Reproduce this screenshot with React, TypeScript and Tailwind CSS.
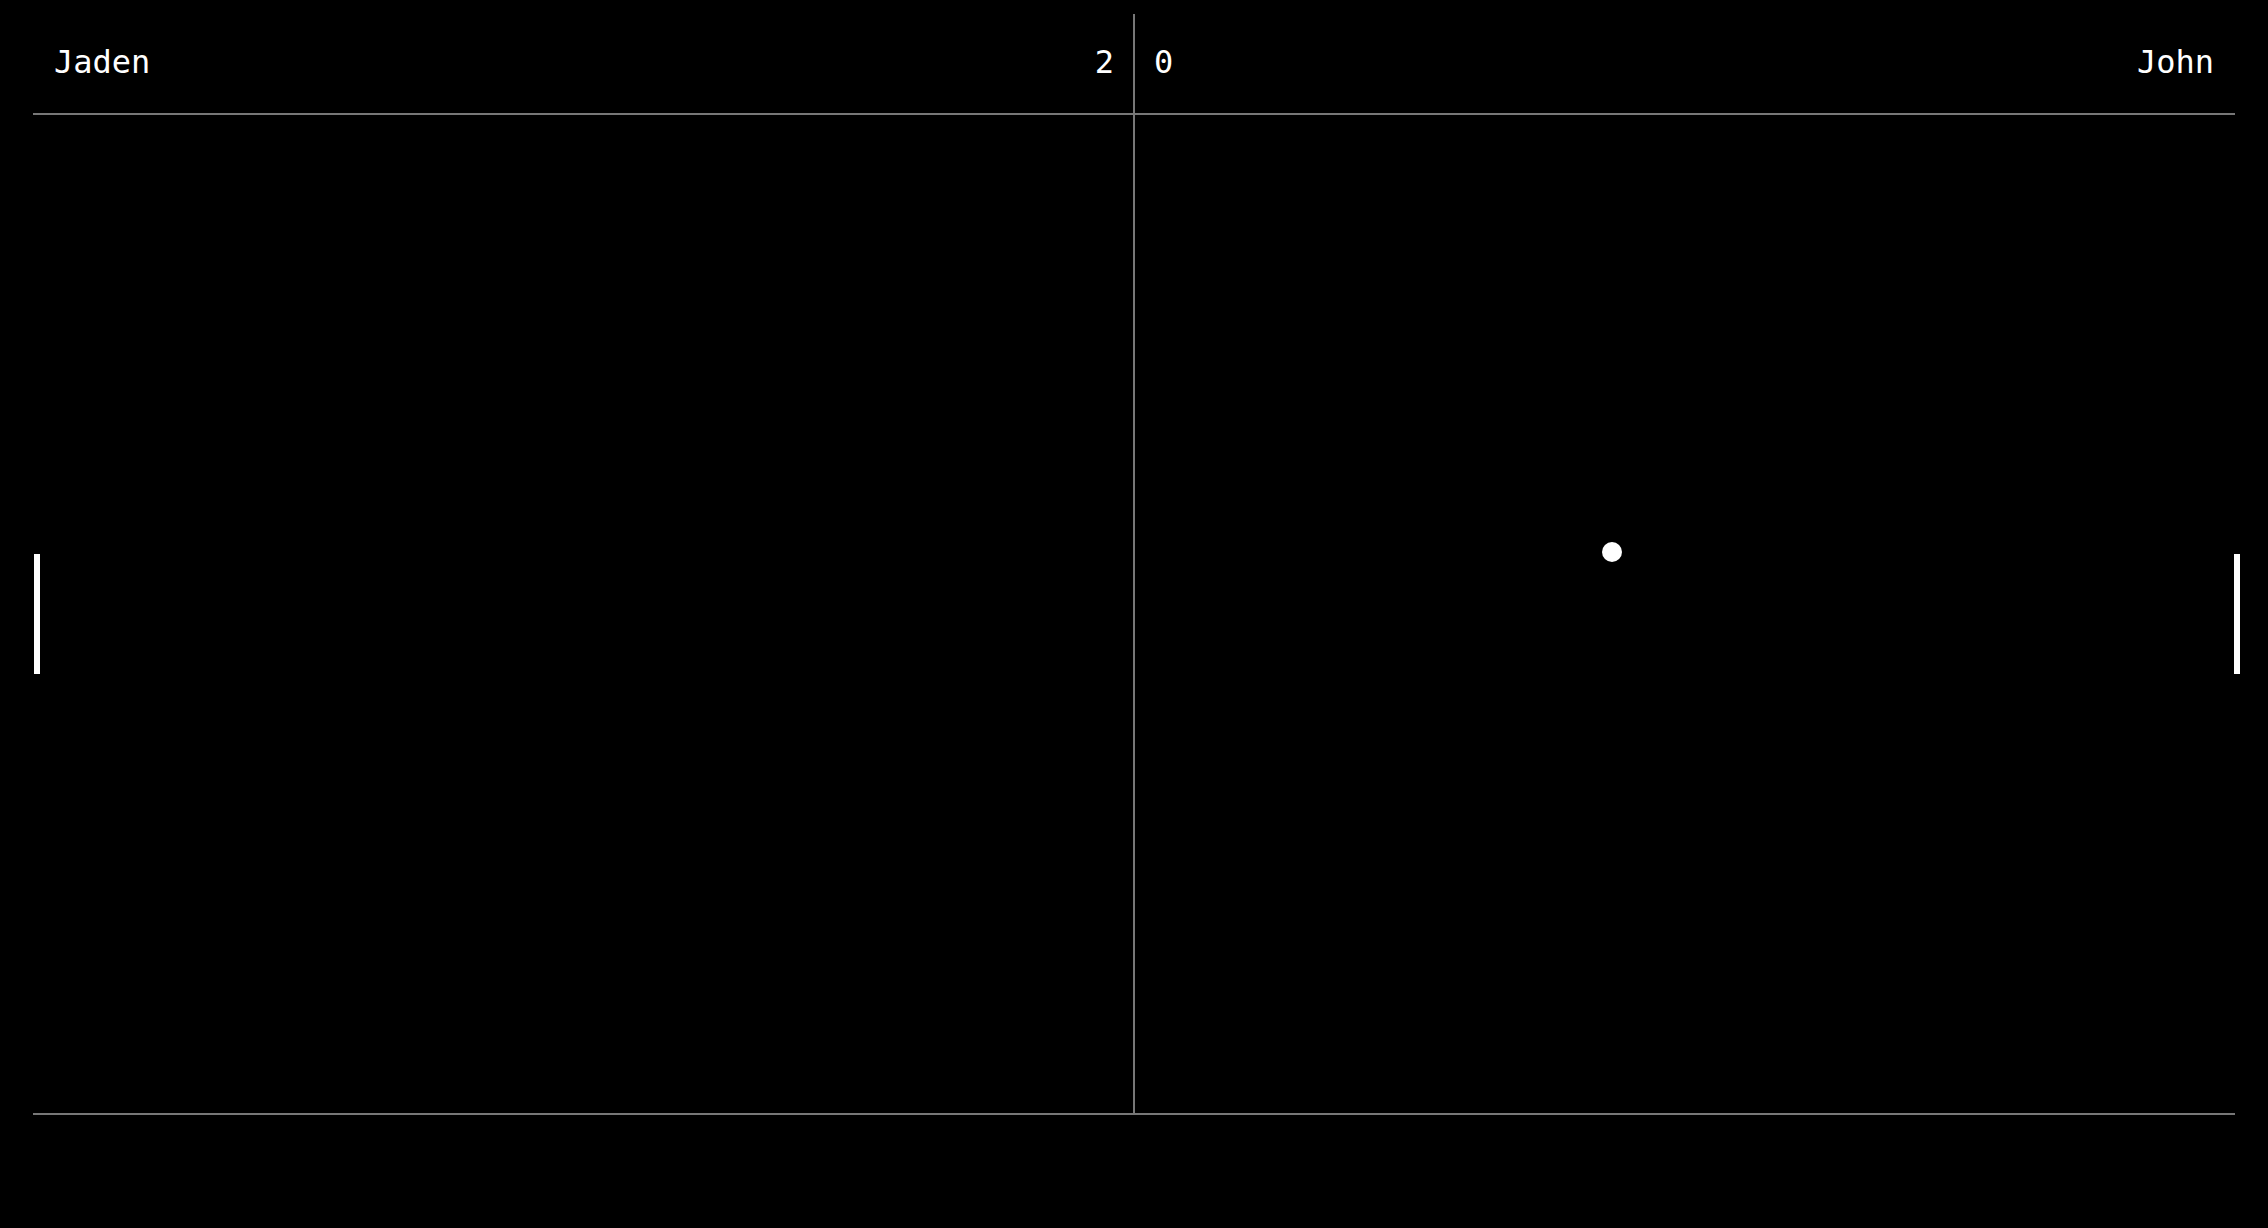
import React from 'react';

// Pong scoreboard + court
const Paddle = ({ side }: { side: 'left' | 'right' }) => (
  <div
    className={
      side === 'left'
        ? 'absolute left-[1px] top-[439px] w-[6px] h-[120px] bg-white'
        : 'absolute right-[-5px] top-[439px] w-[6px] h-[120px] bg-white'
    }
  />
);

const App = () => {
  const players = { left: 'Jaden', right: 'John' };
  const score = { left: 2, right: 0 };

  return (
    <div
      className="w-full h-[1228px] bg-black text-white px-[33px] pt-[14px]"
      style={{ fontFamily: '"DejaVu Sans Mono", "Liberation Mono", monospace' }}
    >
      <div className="grid grid-cols-[1100px_2px_1100px]">
        {/* Header */}
        <div className="h-[101px] border-b-2 border-[#777] flex items-center justify-between pl-[21px] pr-[19px] pb-[3px] text-[32px] leading-none">
          <span>{players.left}</span>
          <span>{score.left}</span>
        </div>
        <div className="row-span-2 bg-[#777]" />
        <div className="h-[101px] border-b-2 border-[#777] flex items-center justify-between pl-[19px] pr-[21px] pb-[3px] text-[32px] leading-none">
          <span>{score.right}</span>
          <span>{players.right}</span>
        </div>

        {/* Court */}
        <div className="relative h-[1000px] border-b-2 border-[#777]">
          <Paddle side="left" />
        </div>
        <div className="relative h-[1000px] border-b-2 border-[#777]">
          <div className="absolute left-[467px] top-[427px] w-[20px] h-[20px] rounded-full bg-white" />
          <Paddle side="right" />
        </div>
      </div>
    </div>
  );
};

export default App;
